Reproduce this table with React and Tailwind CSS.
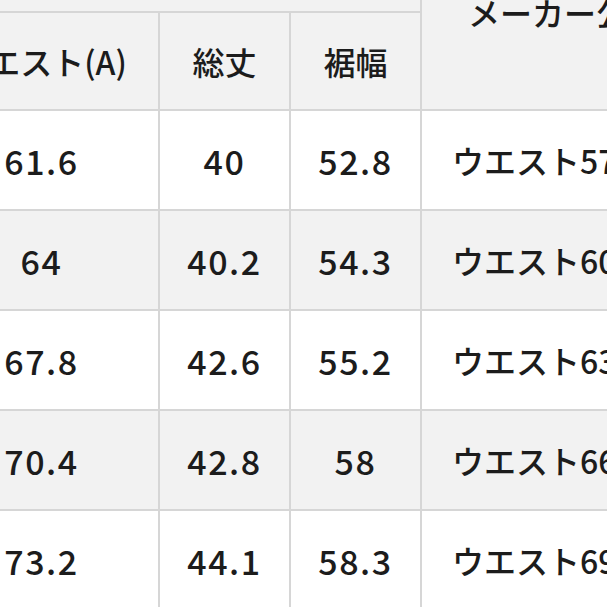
export default function App() {
  const rows = [
    { a: "61.6", b: "40", c: "52.8", d: "ウエスト57~60", bg: "bg-white" },
    { a: "64", b: "40.2", c: "54.3", d: "ウエスト60~63", bg: "bg-[#f2f2f2]" },
    { a: "67.8", b: "42.6", c: "55.2", d: "ウエスト63~66", bg: "bg-white" },
    { a: "70.4", b: "42.8", c: "58", d: "ウエスト66~69", bg: "bg-[#f2f2f2]" },
    { a: "73.2", b: "44.1", c: "58.3", d: "ウエスト69~72", bg: "bg-white" },
  ];
  const font = { fontFamily: '"Noto Sans CJK JP", "Noto Sans", sans-serif' };
  return (
    <div className="w-[607px] h-[607px] overflow-hidden bg-white text-[#1c1c1c] font-medium" style={font}>
      <div className="-ml-[75px] w-[800px] grid grid-cols-[233px_129px_129px_1fr] grid-rows-[11px_96px_98px_98px_98px_98px_98px] gap-[2px] bg-[#d6d6d6]">
        <div className="col-span-3 bg-[#f2f2f2]"></div>
        <div className="row-span-2 bg-[#f2f2f2] pl-[46px] overflow-hidden">
          <div className="-mt-[4px] leading-[32px] text-[32px] whitespace-nowrap">メーカー公式サイズ</div>
        </div>
        <div className="bg-[#f2f2f2] flex items-center justify-center text-[32px] whitespace-nowrap">ウエスト(A)</div>
        <div className="bg-[#f2f2f2] flex items-center justify-center text-[32px]">総丈</div>
        <div className="bg-[#f2f2f2] flex items-center justify-center text-[32px]">裾幅</div>
        {rows.map((r, i) => (
          <div key={i} className="contents">
            <div className={`${r.bg} flex items-center justify-center text-[34px] tracking-[1.5px]`}>{r.a}</div>
            <div className={`${r.bg} flex items-center justify-center text-[34px] tracking-[1.5px]`}>{r.b}</div>
            <div className={`${r.bg} flex items-center justify-center text-[34px] tracking-[1.5px]`}>{r.c}</div>
            <div className={`${r.bg} flex items-center pl-[30px] text-[32px] whitespace-nowrap overflow-hidden`}>{r.d}</div>
          </div>
        ))}
      </div>
    </div>
  );
}
